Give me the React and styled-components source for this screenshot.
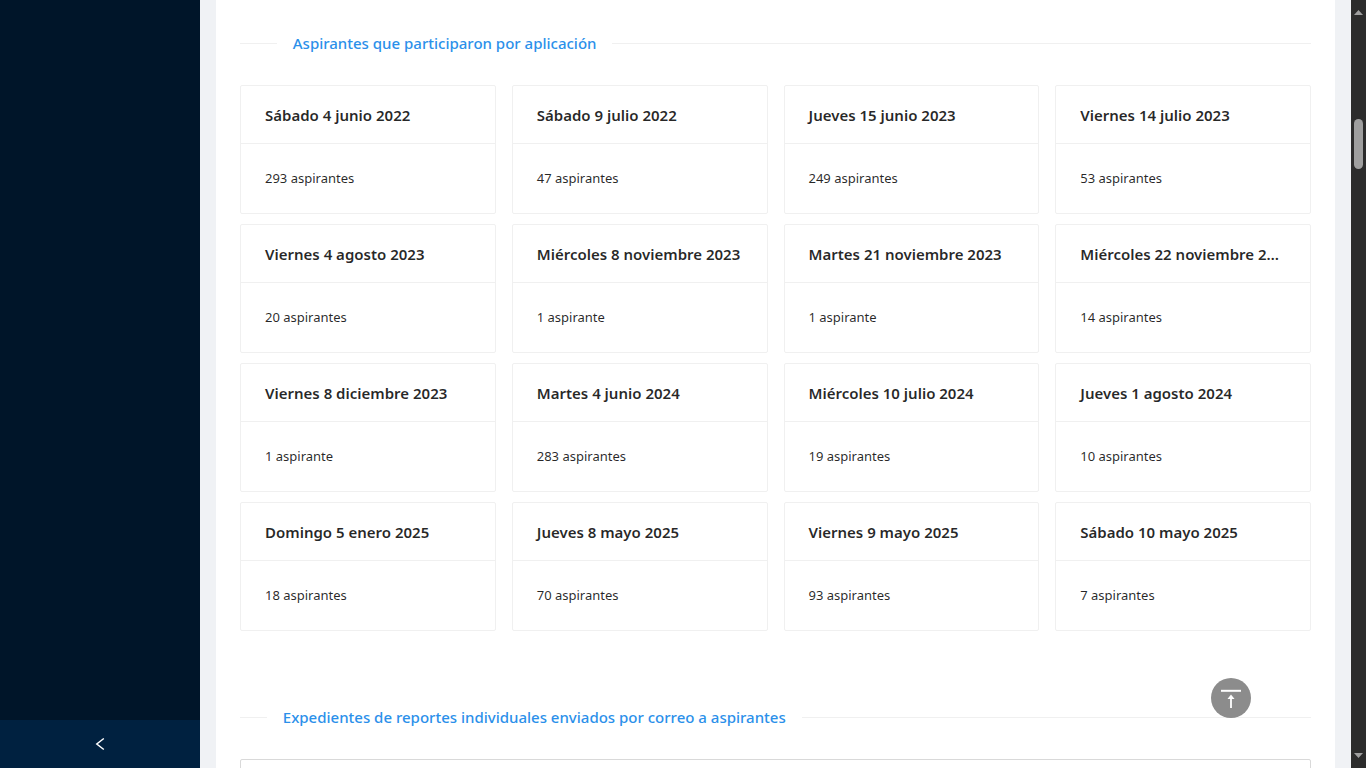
import React from "react";
import styled, { createGlobalStyle } from "styled-components";

const GlobalStyle = createGlobalStyle`
  *, *::before, *::after { box-sizing: border-box; }
  body {
    margin: 0;
    background: #f0f2f5;
    color: rgba(0, 0, 0, 0.85);
    font-family: "Segoe UI", "Noto Sans", "Open Sans", sans-serif;
    font-size: 13px;
    line-height: 22px;
  }
  h2, h3, p { margin: 0; }
`;

const Layout = styled.div`
  display: flex;
  height: 100vh;
  overflow: hidden;
`;

const Sider = styled.aside`
  display: flex;
  flex-direction: column;
  justify-content: flex-end;
  flex: 0 0 200px;
  background: #001529;
`;

const CollapseButton = styled.button`
  display: flex;
  align-items: center;
  justify-content: center;
  height: 48px;
  padding: 0;
  border: 0;
  background: #002140;
  color: #fff;
  cursor: pointer;
`;

const Content = styled.main`
  flex: 1;
  min-width: 0;
  padding: 0 16px;
  overflow: hidden;
`;

const Panel = styled.div`
  min-height: 100%;
  padding: 31px 24px 0;
  background: #fff;
`;

const Divider = styled.h2`
  display: flex;
  align-items: center;
  margin-bottom: 29px;
  color: #2b90ea;
  font-size: 15px;
  font-weight: 550;
  line-height: 25px;
  white-space: nowrap;

  &::before, &::after {
    content: "";
    height: 1px;
    background: #f0f0f0;
  }
  &::before { width: 5%; }
  &::after { width: 95%; }
`;

const DividerText = styled.span`
  padding: 0 16px;
`;

const CardGrid = styled.div`
  display: grid;
  grid-template-columns: repeat(4, minmax(0, 1fr));
  gap: 10px 16px;
  margin-bottom: 74px;
`;

const Card = styled.article`
  border: 1px solid #f0f0f0;
  border-radius: 2px;
`;

const CardTitle = styled.h3`
  padding: 17px 24px 15px;
  border-bottom: 1px solid #f0f0f0;
  font-size: 15px;
  font-weight: 600;
  line-height: 25px;
  overflow: hidden;
  text-overflow: ellipsis;
  white-space: nowrap;
`;

const CardBody = styled.p`
  padding: 23px 24px 24px;
`;

const Records = styled.section`
  height: 80px;
  border: 1px solid #d9d9d9;
  border-radius: 2px;
`;

const BackTop = styled.button`
  position: fixed;
  right: 115px;
  bottom: 50px;
  display: flex;
  align-items: center;
  justify-content: center;
  width: 40px;
  height: 40px;
  padding: 0;
  border: 0;
  border-radius: 50%;
  background: #8c8c8c;
  color: #fff;
  cursor: pointer;
`;

const ScrollTrack = styled.div`
  display: flex;
  flex-direction: column;
  align-items: center;
  justify-content: space-between;
  flex: 0 0 15px;
  padding: 10px 0 10px;
  background: #2c2c2c;
`;

const ScrollRail = styled.div`
  flex: 1;
  padding-top: 104px;
`;

const ScrollThumb = styled.div`
  width: 9px;
  height: 50px;
  border-radius: 5px;
  background: #9f9f9f;
`;

const Arrow = ({ d }) => (
  <svg width="9" height="5" viewBox="0 0 9 5" aria-hidden="true">
    <path d={d} fill="#9f9f9f" />
  </svg>
);

const sessions = [
  ["Sábado 4 junio 2022", 293],
  ["Sábado 9 julio 2022", 47],
  ["Jueves 15 junio 2023", 249],
  ["Viernes 14 julio 2023", 53],
  ["Viernes 4 agosto 2023", 20],
  ["Miércoles 8 noviembre 2023", 1],
  ["Martes 21 noviembre 2023", 1],
  ["Miércoles 22 noviembre 2023", 14],
  ["Viernes 8 diciembre 2023", 1],
  ["Martes 4 junio 2024", 283],
  ["Miércoles 10 julio 2024", 19],
  ["Jueves 1 agosto 2024", 10],
  ["Domingo 5 enero 2025", 18],
  ["Jueves 8 mayo 2025", 70],
  ["Viernes 9 mayo 2025", 93],
  ["Sábado 10 mayo 2025", 7],
];

export default function App() {
  return (
    <>
      <GlobalStyle />
      <Layout>
        <Sider>
          <CollapseButton aria-label="Contraer menú">
            <svg width="14" height="14" viewBox="0 0 14 14" fill="none" aria-hidden="true">
              <path d="M10.800 1.500 3.800 7l7 5.500" stroke="currentColor" strokeWidth="1.500" />
            </svg>
          </CollapseButton>
        </Sider>
        <Content>
          <Panel>
            <Divider>
              <DividerText>Aspirantes que participaron por aplicación</DividerText>
            </Divider>
            <CardGrid>
              {sessions.map(([date, count]) => (
                <Card key={date}>
                  <CardTitle>{date}</CardTitle>
                  <CardBody>{`${count} ${count === 1 ? "aspirante" : "aspirantes"}`}</CardBody>
                </Card>
              ))}
            </CardGrid>
            <Divider>
              <DividerText>Expedientes de reportes individuales enviados por correo a aspirantes</DividerText>
            </Divider>
            <Records />
          </Panel>
        </Content>
        <ScrollTrack>
          <Arrow d="M0 5 4.5 0 9 5z" />
          <ScrollRail>
            <ScrollThumb />
          </ScrollRail>
          <Arrow d="M0 0 4.5 5 9 0z" />
        </ScrollTrack>
        <BackTop aria-label="Volver arriba">
          <svg width="20" height="20" viewBox="0 0 20 20" fill="none" aria-hidden="true">
            <path d="M0 2.8h20" stroke="currentColor" strokeWidth="2" />
            <path d="M10 9v11.500" stroke="currentColor" strokeWidth="1.800" />
            <path d="M10 6.500 13.500 11h-7z" fill="currentColor" />
          </svg>
        </BackTop>
      </Layout>
    </>
  );
}
